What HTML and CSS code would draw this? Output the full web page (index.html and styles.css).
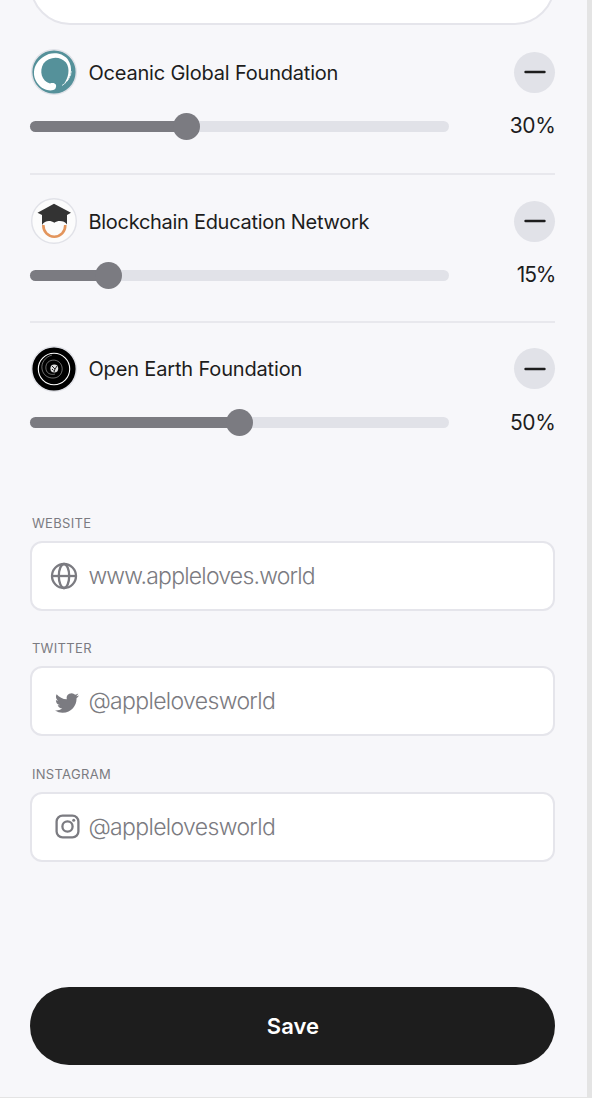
FILE: index.html
```html
<!DOCTYPE html>
<html lang="en">
<head>
<meta charset="utf-8">
<title>Edit profile</title>
<link rel="stylesheet" href="styles.css">
</head>
<body>
<main class="screen">
  <div class="bio"></div>

  <section class="causes">
    <article class="cause">
      <div class="cause-head">
        <svg class="avatar" viewBox="0 0 46 46">
          <circle cx="23" cy="23" r="22.3" fill="#55919a" stroke="#e1e2e8" stroke-width="1.4"/>
          <path d="M13 7.500C19 3 30 2.500 36.500 10C43 19 40 30 32.500 35.500C37.500 29 39.500 20 35 13.500C29 6.500 18 7.500 12.500 14.500C8 22 10.500 32 19 34.500C24 33 26.500 36 24.500 39.500C21 43.500 11.500 41 7.500 35.500C0 27 2 14 13 7.500Z" fill="#fff"/>
          <path d="M31 36.500C36 33.500 40 28 40.300 22" fill="none" stroke="#fff" stroke-width=".8" stroke-dasharray="3 .7 1.500 1"/>
        </svg>
        <span class="cause-name name-oceanic">Oceanic Global Foundation</span>
        <button class="remove" aria-label="Remove"><svg viewBox="0 0 22 4"><path d="M1.500 2H20.500"/></svg></button>
      </div>
      <div class="cause-slider">
        <div class="track"><div class="fill" style="width:156.500px"></div></div>
        <span class="percent">30%</span>
      </div>
    </article>
    <article class="cause">
      <div class="cause-head">
        <svg class="avatar" viewBox="0 0 46 46">
          <circle cx="23" cy="23" r="22.300" fill="#fcfcfc" stroke="#e1e2e8" stroke-width="1.400"/>
          <path d="M12.300 27C12.300 34 17 38.700 23.300 38.700S34.300 34 34.300 27" fill="none" stroke="#e3955c" stroke-width="2.600"/>
          <path d="M23 5.800L40 14.800L36 17V26.500C33.500 22.500 27 22 23.300 24.800C19.500 22 13.500 22.500 11 27V17L6.500 14.800Z" fill="#333"/>
        </svg>
        <span class="cause-name name-blockchain">Blockchain Education Network</span>
        <button class="remove" aria-label="Remove"><svg viewBox="0 0 22 4"><path d="M1.500 2H20.500"/></svg></button>
      </div>
      <div class="cause-slider">
        <div class="track"><div class="fill" style="width:78px"></div></div>
        <span class="percent percent-15">15%</span>
      </div>
    </article>
    <article class="cause">
      <div class="cause-head">
        <svg class="avatar" viewBox="0 0 46 46">
          <circle cx="23" cy="23" r="22.300" fill="#000" stroke="#e1e2e8" stroke-width="1.400"/>
          <g fill="none" stroke="#fff">
            <circle cx="23" cy="23" r="15.700" stroke-width="1.100"/>
            <path d="M21 9C14 11 10 17 11 23C12 29 17 32.500 23 32C29 31.500 32 26 31 21C30 16 25 13 20 14.500C15 16 14 21 15.500 25C17 28 21 29 24 28" stroke-width=".6" opacity=".7"/>
          </g>
          <circle cx="23.300" cy="22.500" r="3.900" fill="#ddd"/>
          <path d="M21 20L24 23L26 20M24 23L23 26M21 23L22.500 24.500" fill="none" stroke="#222" stroke-width="1"/>
        </svg>
        <span class="cause-name name-earth">Open Earth Foundation</span>
        <button class="remove" aria-label="Remove"><svg viewBox="0 0 22 4"><path d="M1.500 2H20.500"/></svg></button>
      </div>
      <div class="cause-slider">
        <div class="track"><div class="fill" style="width:209.500px"></div></div>
        <span class="percent">50%</span>
      </div>
    </article>
  </section>

  <section class="links">
    <div class="field">
      <label class="label">WEBSITE</label>
      <div class="input">
        <svg class="icon globe" viewBox="0 0 28 28"><circle cx="14" cy="14" r="12"/><ellipse cx="14" cy="14" rx="5.200" ry="12"/><path d="M2 14H26"/></svg>
        <span class="value value-site">www.appleloves.world</span>
      </div>
    </div>
    <div class="field">
      <label class="label">TWITTER</label>
      <div class="input">
        <svg class="icon twitter" viewBox="0 0 24 24"><path d="M23.953 4.570a10 10 0 01-2.825.775 4.958 4.958 0 002.163-2.723c-.951.555-2.005.959-3.127 1.184a4.920 4.920 0 00-8.384 4.482C7.690 8.095 4.067 6.130 1.640 3.162a4.822 4.822 0 00-.666 2.475c0 1.710.870 3.213 2.188 4.096a4.904 4.904 0 01-2.228-.616v.060a4.923 4.923 0 003.946 4.827 4.996 4.996 0 01-2.212.085 4.936 4.936 0 004.604 3.417 9.867 9.867 0 01-6.102 2.105c-.390 0-.779-.023-1.170-.067a13.995 13.995 0 007.557 2.209c9.053 0 13.998-7.496 13.998-13.985 0-.210 0-.420-.015-.630A9.935 9.935 0 0024 4.590z"/></svg>
        <span class="value value-handle">@applelovesworld</span>
      </div>
    </div>
    <div class="field">
      <label class="label">INSTAGRAM</label>
      <div class="input">
        <svg class="icon instagram" viewBox="0 0 25 25"><rect x="1.600" y="1.600" width="21.800" height="21.800" rx="6"/><circle cx="12.500" cy="12.500" r="5.100"/><circle class="dot" cx="18.700" cy="6.300" r="1.500"/></svg>
        <span class="value value-handle">@applelovesworld</span>
      </div>
    </div>
  </section>

  <button class="save">Save</button>
</main>
</body>
</html>
```
FILE: styles.css
```css
* { box-sizing: border-box; }
body {
  margin: 0;
  height: 1098px;
  overflow: hidden;
  background: #e4e4e4;
  font-family: Inter, "Liberation Sans", sans-serif;
  color: #1d1d1d;
}
.screen {
  width: 587px;
  height: 1097px;
  padding: 0 31.6px 0 30.4px;
  background: #f7f7fa;
  display: flex;
  flex-direction: column;
}
.bio {
  flex: none;
  height: 80px;
  margin-top: -55px;
  border: 2px solid #e5e5eb;
  border-radius: 40px;
  background: #fff;
}
.causes { display: flex; flex-direction: column; }
.cause {
  height: 147.5px;
  padding-top: 23px;
  border-bottom: 2px solid #e8e8ed;
}
.cause:first-child { height: 150px; padding-top: 24px; }
.cause:last-child { border-bottom: 0; height: 179px; }
.cause-head { display: flex; align-items: center; height: 46px; }
.avatar { width: 46px; height: 46px; margin: 0 11.5px 0 .6px; flex: none; }
.cause-name { font-size: 20px; line-height: 26px; white-space: nowrap; padding-top: 1px; }
.name-oceanic { letter-spacing: -0.2px; }
.name-blockchain { letter-spacing: -0.29px; }
.name-earth { letter-spacing: -0.16px; }
.remove {
  width: 41px;
  height: 41px;
  padding: 0;
  margin-left: auto;
  border: 0;
  border-radius: 50%;
  background: #e1e2e8;
  display: flex;
  align-items: center;
  justify-content: center;
}
.remove svg { width: 22px; height: 4px; stroke: #1d1d1d; stroke-width: 2.4; stroke-linecap: round; }
.cause-slider { display: flex; align-items: center; justify-content: space-between; height: 28px; margin-top: 17px; }
.track { width: 418.5px; height: 11px; border-radius: 6px; background: #e1e2e8; }
.fill { position: relative; height: 11px; border-radius: 6px; background: #7b7b81; }
.fill::after {
  content: "";
  position: absolute;
  right: -13.5px;
  top: -8px;
  width: 27px;
  height: 27px;
  border-radius: 50%;
  background: #7b7b81;
}
.percent { font-size: 21px; letter-spacing: -0.4px; line-height: 28px; }
.percent-15 { letter-spacing: -1.1px; }

.links { display: flex; flex-direction: column; gap: 17px; }
.field { height: 108.5px; padding-top: 12px; }
.label {
  display: block;
  height: 27px;
  padding-left: 1.5px;
  font-size: 13px;
  letter-spacing: 0.33px;
  line-height: 18px;
  color: #7b7b81;
}
.input {
  height: 70px;
  padding-left: 18px;
  border: 2px solid #e5e5eb;
  border-radius: 12px;
  background: #fff;
  display: flex;
  align-items: center;
}
.icon { flex: none; fill: none; stroke: #7b7b81; stroke-width: 2.3; }
.globe { width: 28px; height: 28px; margin-right: 10px; }
.twitter { width: 24px; height: 24px; margin: 3px 9px 0 5px; fill: #7b7b81; stroke: none; }
.instagram { width: 25px; height: 25px; margin: 0 8px 0 5px; }
.dot { fill: #7b7b81; stroke: none; }
.value { font-size: 23px; font-weight: 300; line-height: 30px; color: #7b7b81; white-space: nowrap; }
.value-site { letter-spacing: -0.79px; }
.value-handle { letter-spacing: -0.65px; }
.save {
  flex: none;
  height: 78px;
  margin-top: 126px;
  padding: 0;
  border: 0;
  border-radius: 39px;
  background: #1d1d1d;
  color: #fff;
  font: 600 22px/30px Inter, "Liberation Sans", sans-serif;
}
```
